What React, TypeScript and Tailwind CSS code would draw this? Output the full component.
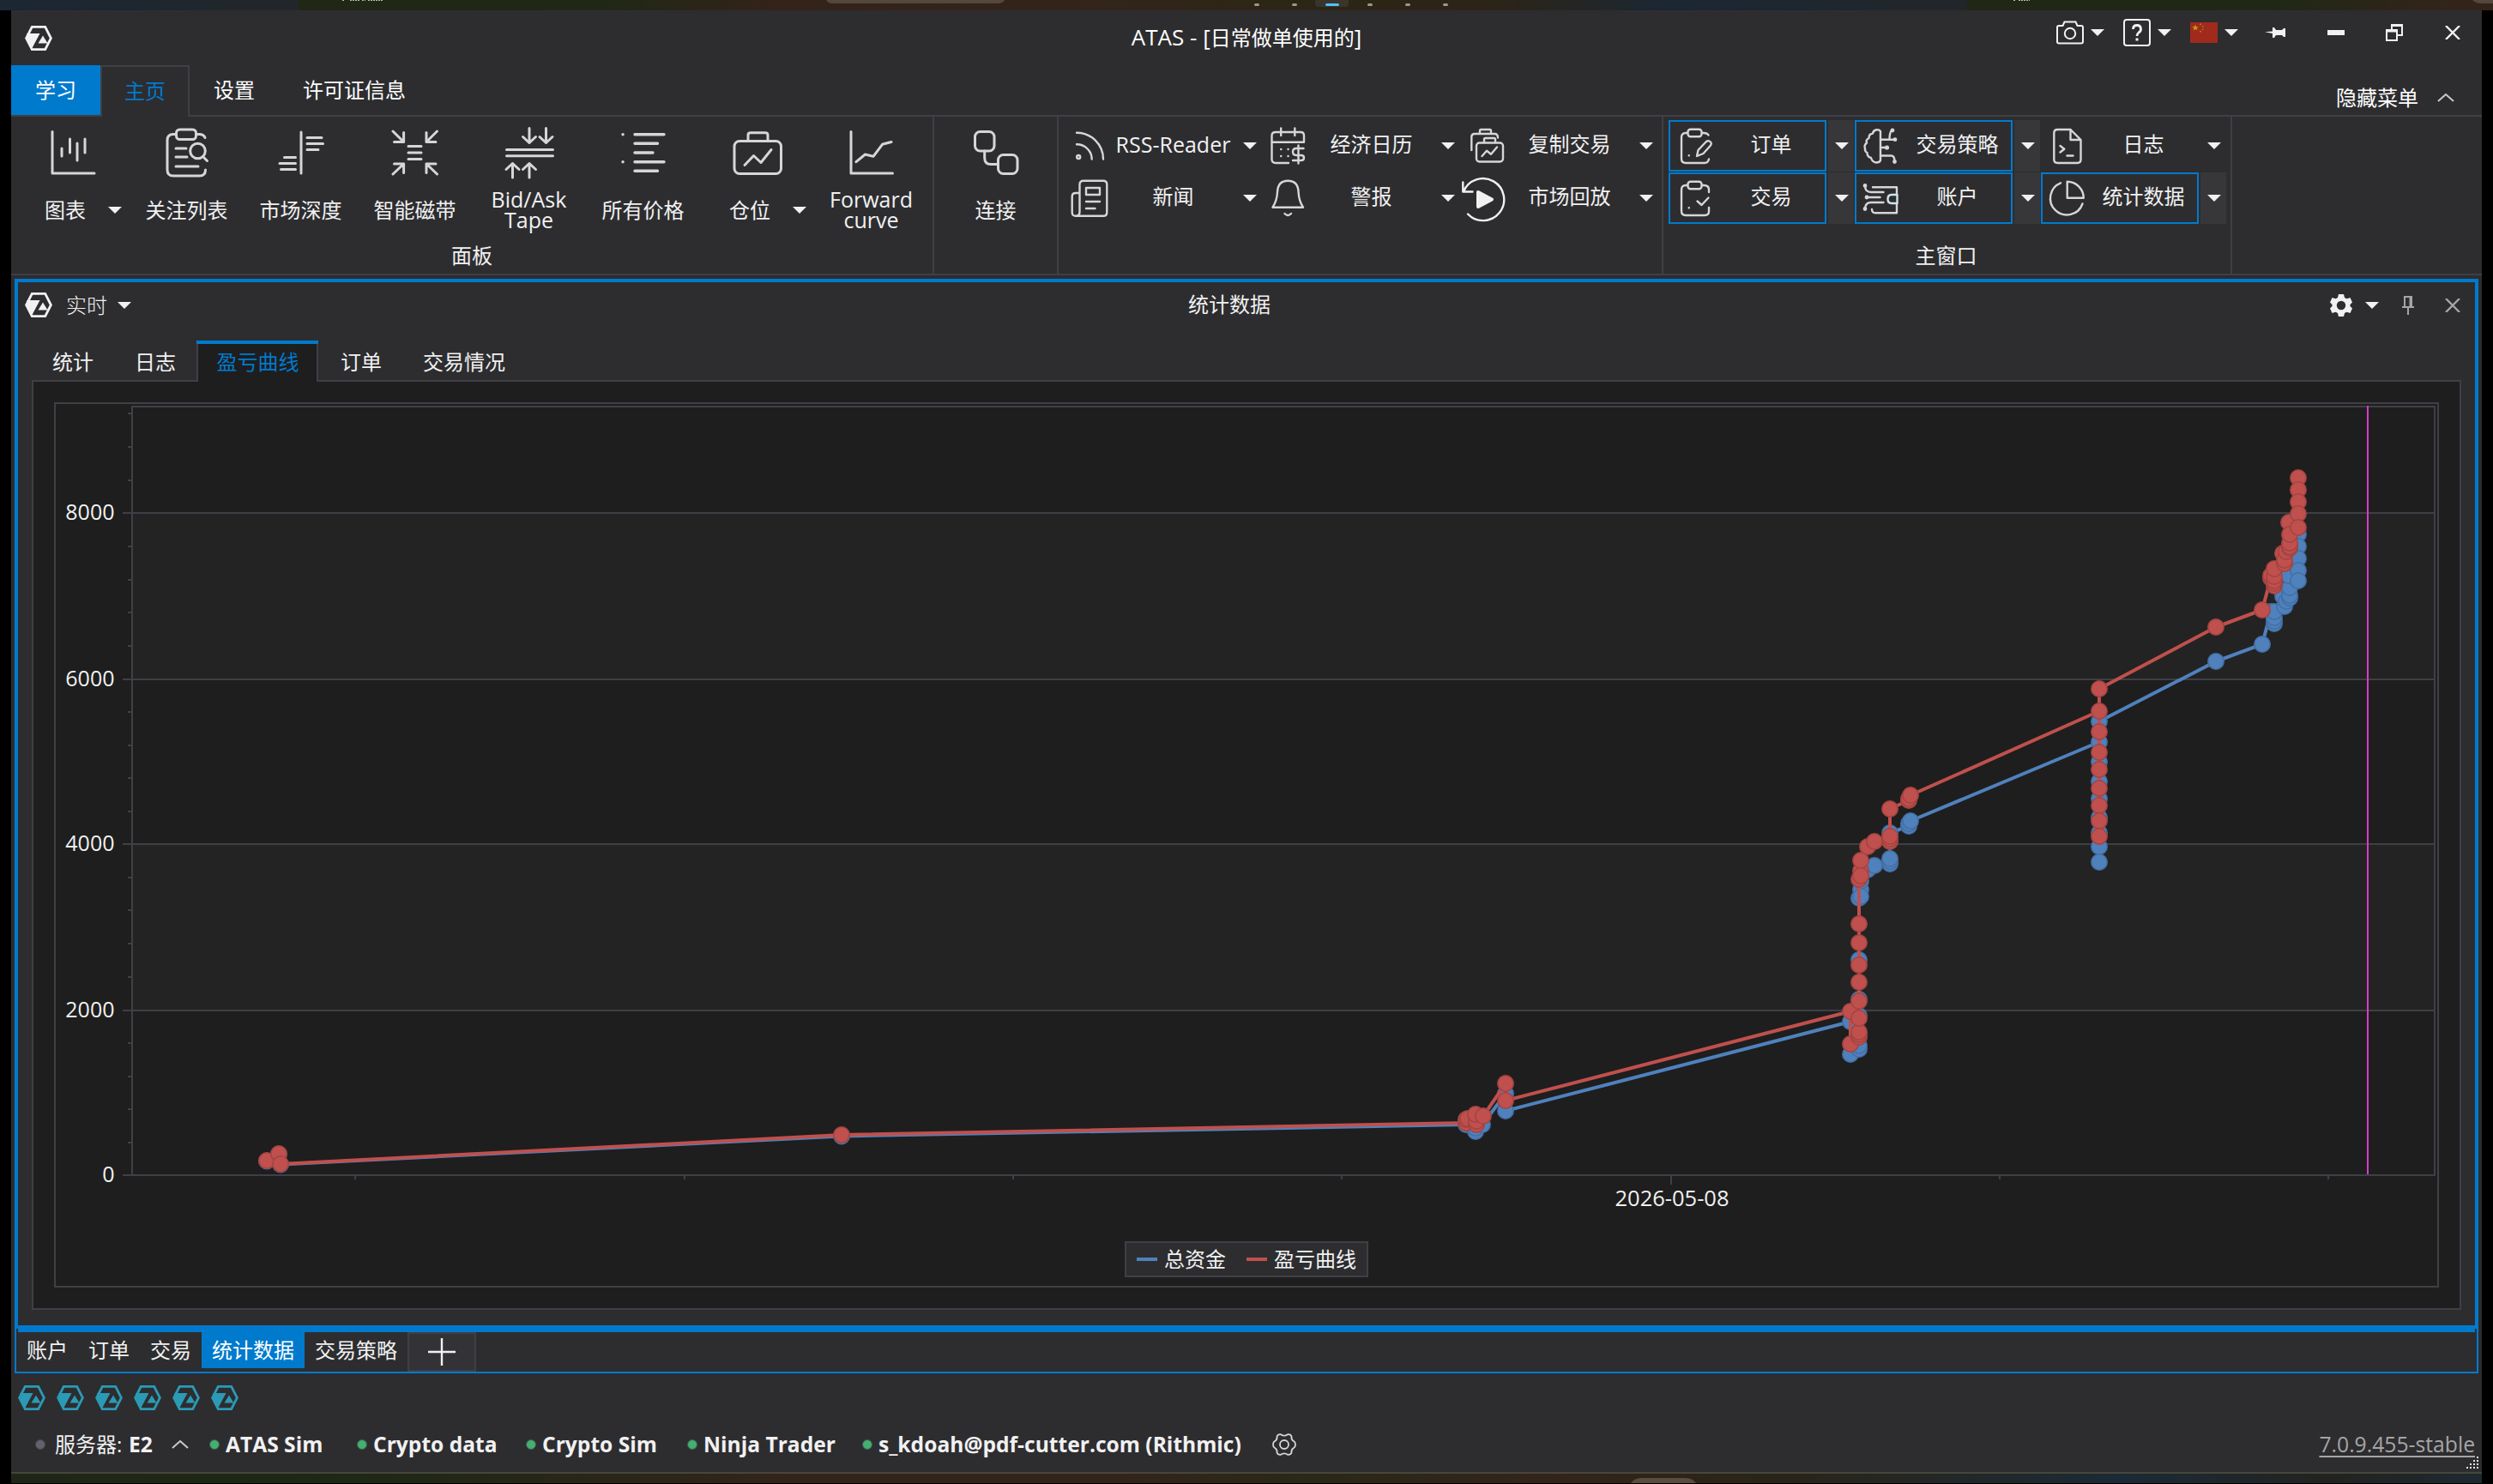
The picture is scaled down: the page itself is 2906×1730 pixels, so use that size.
import React from 'react';

type Point = [number, number];

const CJK = "font-['Open_Sans','Noto_Sans_CJK_SC',sans-serif]";

/* ---------- small pieces ---------- */

function Caret({ className = '' }: { className?: string }) {
  return (
    <svg width="16" height="8" viewBox="0 0 16 8" className={`shrink-0 ${className}`}>
      <path d="M0 0H16L8 8Z" fill="#f1f1f1" />
    </svg>
  );
}

function Logo({ color = '#f1f1f1' }: { color?: string }) {
  return (
    <svg width="32" height="29" viewBox="0 0 32 29" className="shrink-0">
      <path d="M8.3 1.4H23.7L30.4 14.5L23.7 27.6H8.3L1.6 14.5Z" fill="none" stroke={color} strokeWidth="2.8" />
      <path d="M2.5 9H17.5L8.5 26L1.6 15Z" fill={color} />
      <path d="M21 11.5L26.5 20.5H15.5Z" fill={color} />
    </svg>
  );
}

function Cross({ color }: { color: string }) {
  return (
    <svg width="20" height="16" viewBox="0 0 20 16">
      <path d="M2 0L18 16M18 0L2 16" stroke={color} strokeWidth="2.4" />
    </svg>
  );
}

function Chevron({ color = '#c8c8c8' }: { color?: string }) {
  return (
    <svg width="20" height="10" viewBox="0 0 20 10">
      <path d="M1 9L10 1L19 9" fill="none" stroke={color} strokeWidth="2" />
    </svg>
  );
}

/* ---------- ribbon: large buttons ---------- */

function BigIcon({ children, stroke = 3 }: { children: React.ReactNode; stroke?: number }) {
  return (
    <svg
      width="64"
      height="64"
      viewBox="0 0 64 64"
      fill="none"
      stroke="#d6d6d6"
      strokeWidth={stroke}
      strokeLinecap="round"
      strokeLinejoin="round"
    >
      {children}
    </svg>
  );
}

const bigIcons = {
  chart: <BigIcon><path d="M8 7.5V56H57M19 27V36M28.5 16V32M37 21V41M46 16V32" /></BigIcon>,
  watch: (
    <BigIcon>
      <rect x="19.5" y="5" width="23" height="11.5" rx="4" />
      <path d="M19 10.5H16Q9 10.5 9 17.5V52Q9 59 16 59H46.5Q53.5 59 53.5 52M43 10.5H46Q51.5 10.5 53 14.5M19 27H31M19 37H32M19 48H45" />
      <circle cx="44.5" cy="30" r="8.8" />
      <path d="M50.5 36.5L55.5 41.5" />
    </BigIcon>
  ),
  depth: <BigIcon><path d="M32 8V56M39 14.5H56M39 21.5H57.5M39 28.5H52M12.5 37.5H25.5M7 44.6H25.5M8.5 51.6H25.5" /></BigIcon>,
  tape: (
    <BigIcon>
      <path d="M6 7L18.6 19.5M7.5 19.5H18.6V8.5M57.5 7L45 19.5M56 19.5H45V8.5M6 57L18.6 45M7.5 45H18.6V55.5M57.5 57L45 45M56 45H45V55.5M24 24.6H39M24 32H39M24 39.4H39" />
    </BigIcon>
  ),
  bidask: (
    <BigIcon>
      <path d="M5.5 28.5H59.5M5.5 35.7H59.5M32 3.5V20.5M24.5 13.5L32 20.5L39.5 13.5M51.5 3.5V20.5M44 13.5L51.5 20.5L59 13.5M12.5 61V44.5M5 51.5L12.5 44.5L20 51.5M32 61V44.5M24.5 51.5L32 44.5L39.5 51.5" />
    </BigIcon>
  ),
  prices: (
    <BigIcon stroke={3.4}>
      <path d="M8 10.7H8.1M8 42.7H8.1M22 10.7H56M22 21.3H48.5M22 32H43M22 42.7H56M22 53.3H48.5" />
    </BigIcon>
  ),
  position: (
    <BigIcon>
      <rect x="5" y="18.5" width="54.5" height="38" rx="6" />
      <path d="M21 18V11.5Q21 8.8 24 8.8H41Q44 8.8 44 11.5V18M17 46.5L27.5 35.5L36 43.5L48 28.5" />
    </BigIcon>
  ),
  forward: <BigIcon><path d="M8 7.5V56H56.5M14 42.7L24.5 34L34 36.3L44.5 22.3L55 19.5" /></BigIcon>,
  connect: (
    <BigIcon>
      <rect x="7.5" y="7.5" width="22.5" height="22.5" rx="6" />
      <rect x="34.5" y="34.5" width="22.5" height="22" rx="6" />
      <path d="M18.7 30V38Q18.7 45.5 26 45.5H34.5" />
    </BigIcon>
  ),
};

interface BigButtonProps {
  icon: React.ReactNode;
  label: React.ReactNode;
  split?: boolean;
  latin?: boolean;
}

function BigButton({ icon, label, split, latin }: BigButtonProps) {
  return (
    <button className="flex w-[133px] flex-col items-center pt-[10px]">
      {icon}
      {split ? (
        <span className="flex h-[70px] w-full items-center pl-[34px]">
          <span>{label}</span>
          <Caret className="ml-[26px]" />
        </span>
      ) : (
        <span className={latin ? 'flex h-[68px] items-center text-center text-[25px] leading-[24px]' : 'flex h-[70px] items-center'}>
          {label}
        </span>
      )}
    </button>
  );
}

/* ---------- ribbon: small buttons ---------- */

function SmallIcon({ children, color = '#d6d6d6' }: { children: React.ReactNode; color?: string }) {
  return (
    <svg
      width="48"
      height="48"
      viewBox="0 0 48 48"
      fill="none"
      stroke={color}
      strokeWidth="2.4"
      strokeLinecap="round"
      strokeLinejoin="round"
      className="shrink-0 overflow-visible"
    >
      {children}
    </svg>
  );
}

const smallIcons = {
  rss: (
    <SmallIcon>
      <path d="M8 8.7A31 31 0 0 1 39 39.5M8 22.3A17.5 17.5 0 0 1 25.7 39.5" />
      <circle cx="10.2" cy="37" r="2" />
    </SmallIcon>
  ),
  news: (
    <SmallIcon>
      <path d="M11.5 40V8Q11.5 3.7 16 3.7H39Q43.3 3.7 43.3 8V40.5Q43.3 44.8 39 44.8H7Q2.7 44.8 2.7 40.5V22Q2.7 18 7 18H11.5M11.5 40Q11.5 44.8 7 44.8M19 28H35M19 36H29.5" />
      <rect x="19" y="12" width="16" height="8" />
    </SmallIcon>
  ),
  calendar: (
    <SmallIcon>
      <path d="M24 44H9Q4.5 44 4.5 39.5V12Q4.5 8 9 8H38Q42 8 42 12V19.7H4.5M15.2 3.5V12M31.3 3.5V12" />
      <path d="M15.2 28H15.3M23.5 28H23.6M15.2 36H15.3M23.5 36H23.6" />
      <path d="M41.5 27H33Q29 27 29 31T33 35H38.5Q42 35 42 38T38.5 41H29M35.5 23.5V44.5" />
    </SmallIcon>
  ),
  bell: (
    <SmallIcon>
      <path d="M5.5 34.7Q10.5 27 11 17Q11.5 3.7 23.3 3.7T35.6 17Q36 27 41 34.7ZM19.5 42Q23.3 46 27 42" />
    </SmallIcon>
  ),
  copy: (
    <SmallIcon>
      <rect x="12" y="20.5" width="31" height="22" rx="3.5" />
      <path d="M21 20V16.5Q21 15 22.5 15H32.5Q34 15 34 16.5V20M18.5 36L24 29.8L29 33.8L36 25.5" />
      <path d="M6.3 29V13.5Q6.3 10 10 10H33Q37 10 37 14.5M16 10V6.5Q16 5 17.5 5H27.5Q29 5 29 6.5V10" />
    </SmallIcon>
  ),
  replay: (
    <SmallIcon color="#f1f1f1">
      <path d="M2 42.5A24.5 24.5 0 1 0 -3 16.5M-3.7 5.5V16.5H7.5" />
      <path d="M14 17V34L30 25.5Z" fill="#f1f1f1" strokeWidth="4" />
    </SmallIcon>
  ),
  order: (
    <SmallIcon>
      <rect x="16.5" y="4.7" width="16" height="8.6" rx="3" />
      <path d="M16 9H14Q9 9 9 14V39Q9 44 14 44H36Q40 44 41 39.5M33 9H35Q39 9 40.5 11.5M17.7 35.3H17.8" />
      <path d="M27 36L28.5 29L37 20Q39 17.5 41.5 18.5Q45 20 43 23.5L34.5 33Z" />
    </SmallIcon>
  ),
  trade: (
    <SmallIcon>
      <rect x="16.5" y="4.7" width="16" height="8.6" rx="3" />
      <path d="M16 9H14Q9 9 9 14V39Q9 44 14 44H36Q41 44 41 39.5V35M33 9H35Q41 9 41 14V17M17.7 35.3H17.8M27.5 27.5L32.5 32L40.5 23.5" />
    </SmallIcon>
  ),
  strategy: (
    <SmallIcon>
      <path d="M24 7V41M24 7Q22 4.5 18.5 5.5Q15.5 6.5 15 9.5Q10.5 10 10.5 15Q6.5 17 8 20.5Q4.5 23.5 6 27Q5.5 30.5 8.5 32Q8.5 37 13 38Q14.5 43 19 43.5Q23 43.5 24 41" />
      <path d="M24 16.7H41M36.5 6.5Q34.5 10 34.5 16.7M24 26H31M24 35.5H37Q40.5 36 40.5 42.5" />
      <circle cx="38" cy="6" r="1.2" />
      <circle cx="41" cy="16.7" r="1.2" />
      <circle cx="31.5" cy="26" r="1.4" />
      <circle cx="40.5" cy="42.5" r="1.2" />
    </SmallIcon>
  ),
  account: (
    <SmallIcon>
      <path d="M15 11.3H43V20M43 30V41.3H18Q14 41.3 14 37M6 10Q6.5 17 13 17H27.5M8.5 23H23.5M6 36Q6.5 29 13 29H27.5" />
      <path d="M43.5 20H37Q32.5 20 32.5 25T37 30H43.5Z" stroke="#cfe4ee" />
      <circle cx="6" cy="9.5" r="1.2" />
      <circle cx="8" cy="23" r="1.2" />
      <circle cx="6" cy="36.5" r="1.2" />
    </SmallIcon>
  ),
  journal: (
    <SmallIcon>
      <path d="M28.5 5H13.5Q9.3 5 9.3 9V40Q9.3 44 13.5 44H36.5Q40.5 44 40.5 40V17L28.5 5V17H40.5M16.5 24L21.3 27.7L16.5 31.5M24.5 35.5H31.5" />
    </SmallIcon>
  ),
  pie: (
    <SmallIcon>
      <path d="M17 6.3A19.3 19.3 0 1 0 42.5 30.5M24.7 4.7V23.7H43.8A19.2 19.2 0 0 0 24.7 4.7Z" />
    </SmallIcon>
  ),
};

interface SmallButtonProps {
  icon: React.ReactNode;
  label: React.ReactNode;
  active?: boolean;
  wide?: boolean;
}

function SmallButton({ icon, label, active, wide }: SmallButtonProps) {
  return (
    <div className="flex h-[60px] gap-[2px]">
      <button
        className={`flex items-center border-2 pl-[4px] ${wide ? 'w-[198px]' : 'w-[184px]'} ${active ? 'border-[#007acc]' : 'border-transparent'}`}
      >
        {icon}
        <span className="flex h-[54px] flex-1 items-center justify-center pb-1 pl-[3px] whitespace-nowrap">{label}</span>
      </button>
      <button className={`flex w-[30px] items-center justify-center pl-[2px] ${active ? 'bg-[#37373a]' : ''}`}>
        <Caret />
      </button>
    </div>
  );
}

/* ---------- header ---------- */

function TitleBar() {
  return (
    <header className="relative flex h-16 items-start justify-between pr-6 pl-4">
      <div className="pt-[18px]">
        <Logo />
      </div>
      <h1 className="absolute inset-x-0 top-[11px] text-center text-[24px] leading-[40px] text-white">
        <span className="text-[26px]">ATAS - [</span>日常做单使用的<span className="text-[26px]">]</span>
      </h1>
      <div className="flex h-[52px] items-center">
        <svg width="32" height="28" viewBox="0 0 32 28" fill="none" stroke="#f1f1f1" strokeWidth="2">
          <path d="M1 8Q1 6 3 6H7.5L9.5 1.5H22.5L24.5 6H29Q31 6 31 8V24.5Q31 26.5 29 26.5H3Q1 26.5 1 24.5Z" />
          <circle cx="16" cy="15" r="6.2" />
        </svg>
        <Caret className="ml-2" />
        <svg width="32" height="32" viewBox="0 0 32 32" fill="none" stroke="#f1f1f1" strokeWidth="2" className="ml-[22px]">
          <rect x="1" y="1" width="30" height="30" rx="3" />
          <path d="M11.5 12Q11.5 7.5 16 7.5T20.5 12Q20.5 14.5 18 16Q16 17.5 16 20" strokeWidth="2.8" />
          <path d="M16 22.5V25.5" strokeWidth="3" />
        </svg>
        <Caret className="ml-2" />
        <svg width="32" height="24" viewBox="0 0 32 24" className="ml-[22px]">
          <path d="M0 0H32V24H0Z" fill="#a02a1c" />
          <path d="M6 2.5L7 5.2H9.8L7.5 6.9L8.4 9.6L6 8L3.6 9.6L4.5 6.9L2.2 5.2H5Z" fill="#c79a12" />
          <path d="M11 1.5H13V3H11ZM14 4H15.5V5.5H14ZM14 7.5H15.5V9H14ZM11 10H13V11.5H11Z" fill="#b87a16" />
        </svg>
        <Caret className="ml-2" />
        <svg width="24" height="12" viewBox="0 0 24 12" className="ml-[31px]">
          <path d="M0 5.3L9 4.5V0H11L13 3H20L22 1H24V11H22L20 9H13L11 12H9V7Z" fill="#f1f1f1" />
        </svg>
        <span className="ml-[49px] h-[6px] w-5 bg-[#f1f1f1]" />
        <svg width="20" height="20" viewBox="0 0 20 20" fill="none" stroke="#f1f1f1" strokeWidth="2" className="ml-12">
          <path d="M7 6V1H19V13H14M7 2H19" />
          <path d="M1 7H13V19H1ZM1 8.5H13" />
        </svg>
        <span className="ml-12">
          <Cross color="#f1f1f1" />
        </span>
      </div>
    </header>
  );
}

function RibbonTabs() {
  return (
    <nav className="flex h-[60px] text-white">
      <div className="h-[60px] border-b-2 border-[#3f3f46]">
        <div className="flex h-[58px] w-[104px] items-center justify-center bg-[#007acc]">学习</div>
      </div>
      <div className="flex w-[104px] items-center justify-center border-x-2 border-t-2 border-[#3f3f46] pb-[2px] text-[#007acc]">主页</div>
      <div className="flex w-[104px] items-center justify-center border-b-2 border-[#3f3f46]">设置</div>
      <div className="flex w-[176px] items-center justify-center border-b-2 border-[#3f3f46]">许可证信息</div>
      <div className="flex flex-1 items-center justify-end border-b-2 border-[#3f3f46] pt-[18px] pr-[32px]">
        <span className="mr-[22px]">隐藏菜单</span>
        <Chevron />
      </div>
    </nav>
  );
}

function Ribbon() {
  return (
    <div className="flex h-[185px] border-b-2 border-[#3f3f46]">
      <section className="flex w-[1076px] flex-col border-r-2 border-[#3f3f46] pl-[5px]">
        <div className="flex h-[146px]">
          <BigButton icon={bigIcons.chart} label="图表" split />
          <BigButton icon={bigIcons.watch} label="关注列表" />
          <BigButton icon={bigIcons.depth} label="市场深度" />
          <BigButton icon={bigIcons.tape} label="智能磁带" />
          <BigButton icon={bigIcons.bidask} label={<>Bid/Ask<br />Tape</>} latin />
          <BigButton icon={bigIcons.prices} label="所有价格" />
          <BigButton icon={bigIcons.position} label="仓位" split />
          <BigButton icon={bigIcons.forward} label={<>Forward<br />curve</>} latin />
        </div>
        <div className="pr-[5px] text-center leading-[32px]">面板</div>
      </section>
      <section className="flex w-[145px] justify-center border-r-2 border-[#3f3f46]">
        <BigButton icon={bigIcons.connect} label="连接" />
      </section>
      <section className="flex w-[705px] border-r-2 border-[#3f3f46] pt-1 pl-[7px]">
        <div className="grid h-[121px] grid-cols-3 gap-px">
          <SmallButton icon={smallIcons.rss} label={<span className="text-[25px]">RSS-Reader</span>} wide />
          <SmallButton icon={smallIcons.calendar} label="经济日历" wide />
          <SmallButton icon={smallIcons.copy} label="复制交易" wide />
          <SmallButton icon={smallIcons.news} label="新闻" wide />
          <SmallButton icon={smallIcons.bell} label="警报" wide />
          <SmallButton icon={smallIcons.replay} label="市场回放" wide />
        </div>
      </section>
      <section className="flex w-[663px] flex-col border-r-2 border-[#3f3f46] pt-1">
        <div className="grid h-[142px] grid-cols-3 content-start gap-px pr-[5px] pl-[6px]">
          <SmallButton icon={smallIcons.order} label="订单" active />
          <SmallButton icon={smallIcons.strategy} label="交易策略" active />
          <SmallButton icon={smallIcons.journal} label="日志" />
          <SmallButton icon={smallIcons.trade} label="交易" active />
          <SmallButton icon={smallIcons.account} label="账户" active />
          <SmallButton icon={smallIcons.pie} label="统计数据" active />
        </div>
        <div className="pr-[2px] text-center leading-[32px]">主窗口</div>
      </section>
    </div>
  );
}

/* ---------- equity chart ---------- */

const equity: Point[] = [
  [311, 1353.5], [325, 1345.5], [327, 1357.5], [981, 1324.5], [1709, 1311], [1709, 1307], [1720, 1319], [1720, 1315],
  [1728, 1311], [1755, 1275], [1755, 1295], [2157, 1191], [2157, 1229], [2167, 1223], [2167, 1219], [2167, 1184],
  [2167, 1165], [2167, 1119], [2167, 1047], [2169, 1037], [2169, 1027], [2169, 1045], [2177, 1014], [2185, 1009],
  [2203, 1007], [2203, 1004], [2203, 1001], [2203, 971], [2225, 963], [2225, 960], [2227, 957], [2447, 865],
  [2447, 888], [2447, 911], [2447, 931], [2447, 953], [2447, 971], [2447, 987], [2447, 1005], [2447, 841],
  [2583, 771], [2637, 751], [2647, 713], [2651, 727], [2651, 724], [2651, 720], [2651, 713], [2661, 695],
  [2663, 707], [2665, 701], [2669, 697], [2669, 694], [2669, 685], [2668, 671], [2679, 623], [2679, 637],
  [2679, 651], [2679, 665], [2679, 677],
];

const pnl: Point[] = [
  [311, 1353], [325, 1345], [327, 1357], [981, 1323], [1709, 1309], [1709, 1305], [1711, 1304], [1721, 1311],
  [1721, 1307], [1720, 1299], [1729, 1301], [1755, 1263], [1755, 1283], [2157, 1179], [2157, 1217], [2167, 1209],
  [2167, 1206], [2167, 1203], [2167, 1187], [2167, 1167], [2167, 1145], [2167, 1125], [2167, 1099], [2167, 1077],
  [2167, 1025], [2169, 1015], [2169, 1003], [2169, 1021], [2177, 987], [2185, 981], [2203, 981], [2203, 978],
  [2203, 975], [2203, 943], [2225, 933], [2225, 931], [2227, 927], [2447, 829], [2447, 853], [2447, 877],
  [2447, 897], [2447, 919], [2447, 939], [2447, 957], [2447, 975], [2447, 803], [2583, 731], [2637, 711],
  [2647, 674], [2647, 671], [2651, 683], [2651, 680], [2651, 677], [2651, 672], [2651, 663], [2661, 645],
  [2663, 657], [2663, 653], [2665, 643], [2669, 639], [2669, 637], [2669, 633], [2668, 609], [2669, 623],
  [2679, 557], [2679, 571], [2679, 585], [2679, 599], [2679, 615],
];

const gridRows = [
  { value: '8000', y: 598 },
  { value: '6000', y: 792 },
  { value: '4000', y: 984 },
  { value: '2000', y: 1178 },
  { value: '0', y: 1370 },
];

const minorTicks = [
  482, 521, 560, 637, 676, 714, 753, 830, 869, 907, 946, 1023, 1061, 1100, 1139, 1216, 1255, 1293, 1332,
];

const dayTicks = [414, 798, 1181, 1564, 1948, 2331, 2714];

function Series({ points, color, edge }: { points: Point[]; color: string; edge: string }) {
  return (
    <g>
      <polyline points={points.map((p) => p.join(',')).join(' ')} fill="none" stroke={color} strokeWidth="4" strokeLinejoin="round" />
      {points.map(([x, y], i) => (
        <circle key={i} cx={x} cy={y} r="9.2" fill={color} stroke={edge} strokeWidth="1.6" />
      ))}
    </g>
  );
}

function EquityChart() {
  return (
    <svg width="2776" height="976" viewBox="65 471 2776 976" className="shrink-0">
      <rect x="155" y="599" width="2682" height="192" fill="#232323" />
      <rect x="155" y="985" width="2682" height="192" fill="#232323" />
      <rect x="154" y="474" width="2684" height="896" fill="none" stroke="#3f3f46" strokeWidth="2" />
      {gridRows.map((row) => (
        <g key={row.value}>
          <path d={`M143 ${row.y}H2838`} stroke="#3f3f46" strokeWidth="2" />
          <text x="133.5" y={row.y + 8} textAnchor="end" fontSize="25" fill="#f1f1f1">
            {row.value}
          </text>
        </g>
      ))}
      {minorTicks.map((y) => (
        <path key={y} d={`M149 ${y}H154`} stroke="#3f3f46" strokeWidth="2" />
      ))}
      {dayTicks.map((x) => (
        <path key={x} d={`M${x} 1370V${x === 1948 ? 1381 : 1375}`} stroke="#3f3f46" strokeWidth="2" />
      ))}
      <text x="1949" y="1406" textAnchor="middle" fontSize="25.5" fill="#f1f1f1">
        2026-05-08
      </text>
      <Series points={equity} color="#4f81bd" edge="#446fa3" />
      <Series points={pnl} color="#c0504d" edge="#a34442" />
      <path d="M2760 473V1369" stroke="#da3bcb" strokeWidth="2" />
    </svg>
  );
}

function Legend() {
  return (
    <div className="mx-auto flex h-[42px] w-[284px] items-center border-2 border-[#3f3f46] bg-[#2d2d30] pl-3">
      <span className="h-1 w-6 bg-[#4f81bd]" />
      <span className="ml-2">总资金</span>
      <span className="ml-6 h-1 w-6 bg-[#c0504d]" />
      <span className="ml-2">盈亏曲线</span>
    </div>
  );
}

/* ---------- statistics panel ---------- */

function PanelHeader() {
  return (
    <div className="relative flex h-[53px] items-center justify-between pr-4 pl-2">
      <div className="flex items-center">
        <Logo />
        <span className="ml-4 font-light">实时</span>
        <Caret className="ml-3" />
      </div>
      <div className="absolute inset-y-0 left-0 flex w-[2824px] items-center justify-center pb-px">统计数据</div>
      <div className="flex items-center">
        <svg width="26" height="26" viewBox="0 0 26 26">
          <path
            fillRule="evenodd"
            fill="#f1f1f1"
            d="M10 0H16L17 4L19.5 5.3L23.5 4L26 9.5L23.5 12V14L26 16.5L23.5 22L19.5 20.7L17 22L16 26H10L9 22L6.5 20.7L2.5 22L0 16.5L2.5 14V12L0 9.5L2.5 4L6.5 5.3L9 4ZM13 7.8A5.2 5.2 0 1 0 13 18.2A5.2 5.2 0 1 0 13 7.8Z"
          />
        </svg>
        <Caret className="ml-[15px]" />
        <svg width="14" height="22" viewBox="0 0 14 22" fill="none" stroke="#a5a5a5" strokeWidth="2" className="ml-[27px]">
          <path d="M3 13V1H11V13M9.5 1V13M0 13H14M7 13V22" />
        </svg>
        <span className="ml-[35px]">
          <Cross color="#a5a5a5" />
        </span>
      </div>
    </div>
  );
}

function PanelTabs() {
  return (
    <div className="mt-[15px] flex h-[48px] pl-4">
      <div className="flex w-24 items-center justify-center border-b-2 border-[#3f3f46] pt-1">统计</div>
      <div className="flex w-24 items-center justify-center border-b-2 border-[#3f3f46] pt-1">日志</div>
      <div className="flex w-[142px] flex-col bg-[#1e1e1e]">
        <div className="h-1 bg-[#007acc]" />
        <div className="flex flex-1 items-center justify-center border-x-2 border-[#3f3f46] pb-[2px] pl-px text-[#007acc]">盈亏曲线</div>
      </div>
      <div className="flex w-[100px] items-center justify-center border-b-2 border-[#3f3f46] pt-1">订单</div>
      <div className="flex w-[140px] items-center justify-center border-b-2 border-[#3f3f46] pt-1">交易情况</div>
      <div className="mr-4 flex-1 border-b-2 border-[#3f3f46]" />
    </div>
  );
}

function StatisticsPanel() {
  return (
    <main className="mx-1 mt-1 h-[1224px] border-4 border-[#007acc]">
      <PanelHeader />
      <PanelTabs />
      <div className="mx-4 h-[1082px] border-x-2 border-b-2 border-[#3f3f46] bg-[#1e1e1e] p-6">
        <div className="flex h-[1032px] flex-col border-2 border-[#3f3f46]">
          <EquityChart />
          <Legend />
        </div>
      </div>
    </main>
  );
}

/* ---------- footer ---------- */

function WindowTabs() {
  const tabs = ['账户', '订单', '交易', '统计数据', '交易策略'];
  return (
    <div className="mx-1 h-[52px] border-x-2 border-b-2 border-[#007acc]">
      <div className="mx-[2px] h-1 bg-[#007acc]" />
      <div className="flex h-[46px]">
        {tabs.map((tab) => (
          <div
            key={tab}
            className={`flex h-[42px] items-center px-3 pb-px ${tab === '统计数据' ? 'bg-[#007acc] text-white' : ''}`}
          >
            {tab}
          </div>
        ))}
        <div className="flex h-[46px] w-20 items-center justify-center border-2 border-[#3f3f46] bg-[#333337]">
          <svg width="32" height="32" viewBox="0 0 32 32" stroke="#f1f1f1" strokeWidth="2.4">
            <path d="M0 16H32M16 0V32" />
          </svg>
        </div>
      </div>
    </div>
  );
}

function Connection({ name, width }: { name: string; width: string }) {
  return (
    <div className={`flex items-center ${width}`}>
      <span className="size-3 shrink-0 rounded-full border border-[#3d5a49] bg-[#45ae71]" />
      <span className="ml-[7px] text-[24.6px] font-bold whitespace-nowrap">{name}</span>
    </div>
  );
}

function StatusBar() {
  return (
    <footer className="flex h-[58px] items-center pr-2 pl-7">
      <span className="size-3 rounded-full border border-[#46464e] bg-[#62626c]" />
      <span className="ml-[11px] w-[86px] whitespace-nowrap">服务器:</span>
      <span className="w-[50px] text-[24.6px] font-bold">E2</span>
      <Chevron />
      <span className="w-6" />
      <Connection name="ATAS Sim" width="w-[172px]" />
      <Connection name="Crypto data" width="w-[197px]" />
      <Connection name="Crypto Sim" width="w-[188px]" />
      <Connection name="Ninja Trader" width="w-[204px]" />
      <Connection name="s_kdoah@pdf-cutter.com (Rithmic)" width="w-[478px]" />
      <svg width="28" height="26" viewBox="0 0 28 26" fill="none" stroke="#d6d6d6" strokeWidth="1.8" strokeLinejoin="round">
        <path d="M10 1.2Q14 4 18 1.2Q21.5 0.8 22.5 3.5Q22 7.5 25 9Q27 10 27 13T25 17Q22 18.500 22.5 22.500Q21.5 25.200 18 24.800Q14 22 10 24.800Q6.500 25.200 5.500 22.500Q6 18.500 3 17Q1 16 1 13T3 9Q6 7.500 5.500 3.500Q6.500 0.800 10 1.200Z" />
        <circle cx="14" cy="13" r="5" />
      </svg>
      <a className="ml-auto text-[24.7px] text-[#a5a5a5] underline underline-offset-4">7.0.9.455-stable</a>
    </footer>
  );
}

function ResizeGrip() {
  return (
    <svg width="14" height="14" viewBox="0 0 14 14" className="absolute right-1 bottom-[4px]">
      <path
        d="M12 0H14V2H12ZM8 4H10V6H8ZM12 4H14V6H12ZM4 8H6V10H4ZM8 8H10V10H8ZM12 8H14V10H12ZM0 12H2V14H0ZM4 12H6V14H4ZM8 12H10V14H8ZM12 12H14V14H12Z"
        fill="#e4e4e4"
      />
    </svg>
  );
}

/* ---------- desktop behind the window ---------- */

function DesktopTop() {
  return (
    <div className="h-3 bg-[linear-gradient(90deg,#1b2733_0,#22262a_348px,#202715_348px,#1f2815_700px,#33231a_900px,#33241a_1250px,#2c2616_1500px,#2c2417_1740px,#1b2733_1945px,#22262a_2293px,#202715_2293px,#1f2815_2640px,#33241a_2860px)]">
      <svg width="2906" height="12" viewBox="0 0 2906 12">
        <path d="M963 0Q965 4 971 4H1163Q1169 4 1171 0Z" fill="#54483e" />
        <path d="M2882 0Q2886 4 2892 4H2906V0Z" fill="#54483e" />
        <path d="M1533 0H1572V4Q1572 8 1568 8H1537Q1533 8 1533 4Z" fill="#3b342b" />
        <path d="M1463.5 5.5H1466.5M1507.5 5.5H1510.5M1595.5 5.5H1598.5M1639.5 5.5H1642.5M1683.5 5.5H1686.5" stroke="#9c968d" strokeWidth="3" strokeLinecap="round" />
        <path d="M1546.5 5.5H1559.5" stroke="#4cc2ff" strokeWidth="3" strokeLinecap="round" />
        <path d="M399 0.5H401M408 0.5H419M422 0.5H426M429 0.5H446M2347 0.5H2350M2353 0.5H2366" stroke="#b9bdb0" strokeDasharray="2 1" />
      </svg>
    </div>
  );
}

export default function App() {
  return (
    <div className={`h-[1730px] w-[2906px] overflow-hidden bg-black text-[24px] text-[#f1f1f1] ${CJK}`}>
      <DesktopTop />
      <div className="relative mx-[13px] flex h-[1706px] flex-col border-b-2 border-[#47463c] bg-[#2d2d30] leading-[32px]">
        <TitleBar />
        <RibbonTabs />
        <Ribbon />
        <StatisticsPanel />
        <WindowTabs />
        <div className="mt-[14px] flex h-[29px] gap-[13px] pl-2">
          {[0, 1, 2, 3, 4, 5].map((n) => (
            <Logo key={n} color="#2b9ab5" />
          ))}
        </div>
        <div className="mt-[11px]">
          <StatusBar />
        </div>
        <ResizeGrip />
      </div>
      <div className="mx-[13px] h-[11px] bg-[linear-gradient(90deg,#1f2617_0,#1d2815_400px,#33241a_900px,#33241a_1300px,#2a2817_1500px,#33241a_1800px,#2a2418_2050px,#1b2a36_2460px,#222320_2700px,#1d2931_2880px)]">
        <svg width="2880" height="11" viewBox="0 0 2880 11">
          <path d="M1888 11Q1892 5 1900 5H1952Q1960 5 1964 11Z" fill="#5a4c3e" />
        </svg>
      </div>
    </div>
  );
}
